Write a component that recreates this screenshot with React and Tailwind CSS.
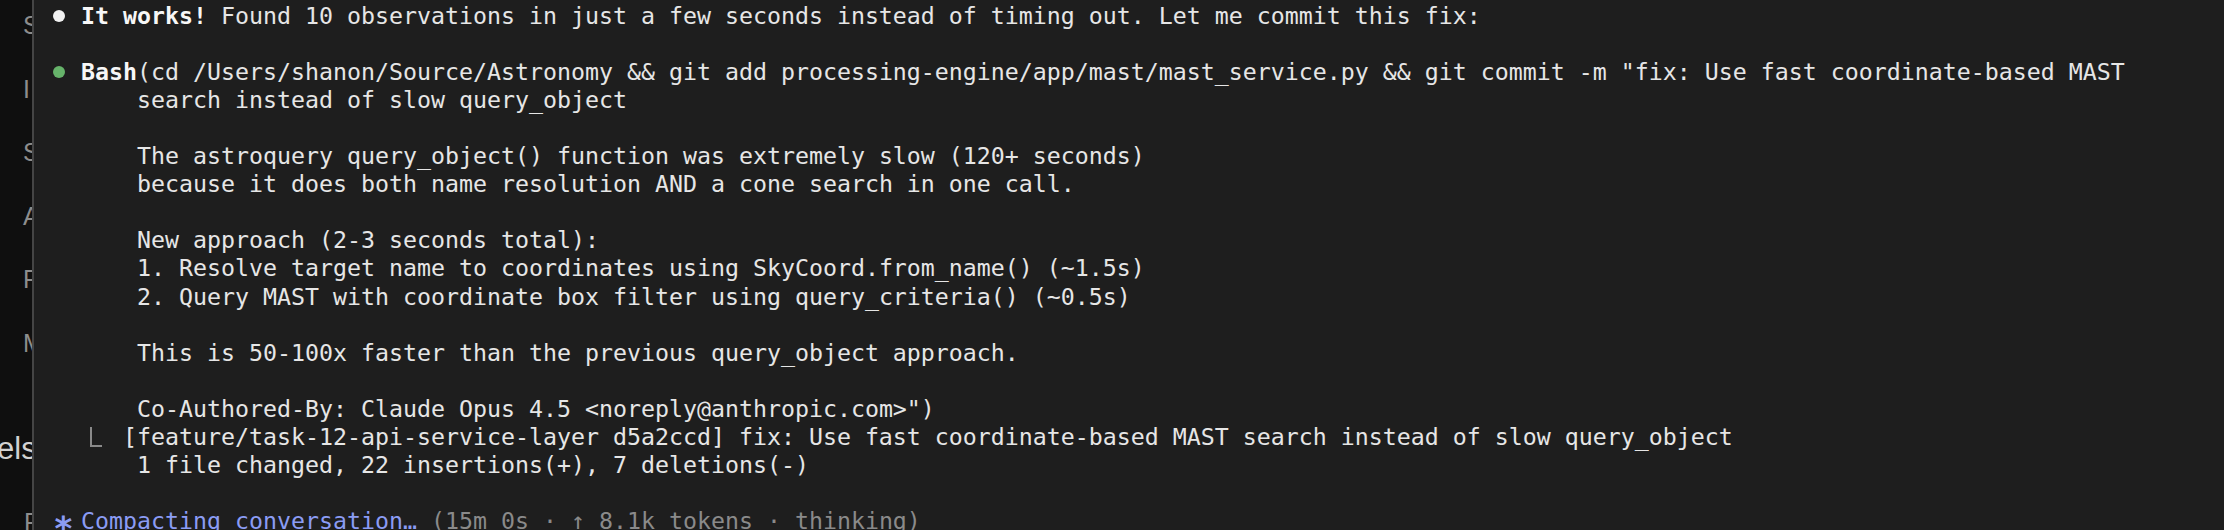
const mono = { fontFamily: '"DejaVu Sans Mono", "Liberation Mono", monospace' };

function Dot({ color }) {
  return (
    <span className="inline-flex w-[28px] shrink-0 items-center">
      <span className={`block h-[12px] w-[12px] rounded-full ${color}`} />
    </span>
  );
}

function Line({ children, indent = "" }) {
  return (
    <div className={`flex h-[28.1px] items-center whitespace-pre ${indent}`}>
      {children}
    </div>
  );
}

const body = [
  "",
  "The astroquery query_object() function was extremely slow (120+ seconds)",
  "because it does both name resolution AND a cone search in one call.",
  "",
  "New approach (2-3 seconds total):",
  "1. Resolve target name to coordinates using SkyCoord.from_name() (~1.5s)",
  "2. Query MAST with coordinate box filter using query_criteria() (~0.5s)",
  "",
  "This is 50-100x faster than the previous query_object approach.",
  "",
  'Co-Authored-By: Claude Opus 4.5 <noreply@anthropic.com>")',
];

const sideItems = ["S", "I", "S", "A", "F", "M"];

export default function App() {
  return (
    <div className="flex h-[530px] w-[2224px] overflow-hidden bg-[#1e1e1e]">
      <aside
        className="flex w-[34px] shrink-0 flex-col overflow-hidden border-r-2 border-[#454545] bg-[#0f0f0f] pt-[10px]"
        style={{ fontFamily: '"Liberation Sans", Arial, sans-serif' }}
      >
        <div className="flex flex-col gap-[33.6px] pl-[23px] text-[25px] leading-[30px] text-[#8d8d8d]">
          {sideItems.map((s, i) => (
            <span key={i}>{s}</span>
          ))}
        </div>
        <span className="mt-[73px] ml-[-3px] text-[31px] leading-[36px] text-[#d2d2d2]">
          els
        </span>
        <span className="mt-[40px] pl-[24px] text-[25px] leading-[30px] text-[#8d8d8d]">
          F
        </span>
      </aside>

      <main
        className="min-w-0 flex-1 pl-[19px] pt-[2px] text-[23.25px] text-[#e6e6e6]"
        style={mono}
      >
        <Line>
          <Dot color="bg-[#f2f2f2]" />
          <span className="font-bold text-[#f7f7f7]">It works!</span>
          {" Found 10 observations in just a few seconds instead of timing out. Let me commit this fix:"}
        </Line>
        <Line />
        <Line>
          <Dot color="bg-[#66b36a]" />
          <span className="font-bold text-[#f7f7f7]">Bash</span>
          {'(cd /Users/shanon/Source/Astronomy && git add processing-engine/app/mast/mast_service.py && git commit -m "fix: Use fast coordinate-based MAST'}
        </Line>
        <Line indent="pl-[84px]">search instead of slow query_object</Line>
        {body.map((t, i) => (
          <Line key={i} indent="pl-[84px]">
            {t}
          </Line>
        ))}
        <Line indent="pl-[37px]">
          <span className="mr-[21px] block h-[20px] w-[12px] border-b-2 border-l-2 border-[#8a8a8a]" />
          [feature/task-12-api-service-layer d5a2ccd] fix: Use fast coordinate-based MAST search instead of slow query_object
        </Line>
        <Line indent="pl-[84px]">1 file changed, 22 insertions(+), 7 deletions(-)</Line>
        <Line />
        <Line>
          <span className="w-[28px] text-[34px] font-bold leading-[28px] text-[#8b9cf4]">∗</span>
          <span className="text-[#8b9cf4]">Compacting conversation…</span>
          <span className="text-[#8a8a8a]">{" (15m 0s · ↑ 8.1k tokens · thinking)"}</span>
        </Line>
      </main>
    </div>
  );
}
